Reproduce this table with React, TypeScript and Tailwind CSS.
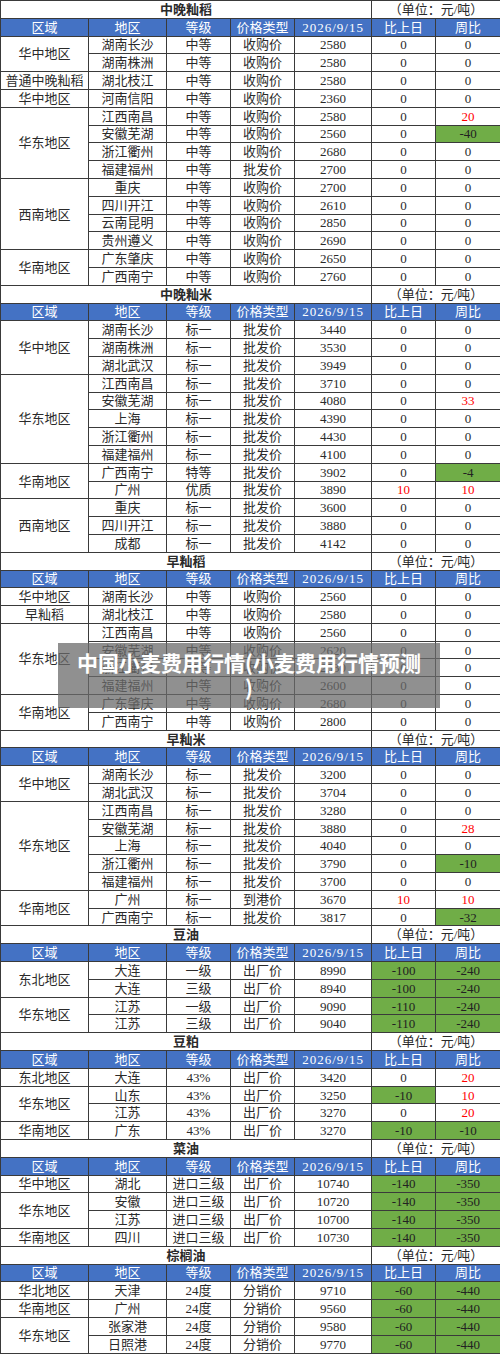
import React from "react";

type Row = [string, string, string, string, string, string];
// group: region label + rows
type Group = { area: string; rows: Row[] };
type Section = { title: string; groups: Group[] };

const sections: Section[] = [
  {
    title: "中晚籼稻",
    groups: [
      { area: "华中地区", rows: [["湖南长沙", "中等", "收购价", "2580", "0", "0"], ["湖南株洲", "中等", "收购价", "2580", "0", "0"]] },
      { area: "普通中晚籼稻", rows: [["湖北枝江", "中等", "收购价", "2580", "0", "0"]] },
      { area: "华中地区", rows: [["河南信阳", "中等", "收购价", "2360", "0", "0"]] },
      {
        area: "华东地区",
        rows: [
          ["江西南昌", "中等", "收购价", "2580", "0", "20"],
          ["安徽芜湖", "中等", "收购价", "2560", "0", "-40"],
          ["浙江衢州", "中等", "收购价", "2680", "0", "0"],
          ["福建福州", "中等", "批发价", "2700", "0", "0"],
        ],
      },
      {
        area: "西南地区",
        rows: [
          ["重庆", "中等", "收购价", "2700", "0", "0"],
          ["四川开江", "中等", "收购价", "2610", "0", "0"],
          ["云南昆明", "中等", "收购价", "2850", "0", "0"],
          ["贵州遵义", "中等", "收购价", "2690", "0", "0"],
        ],
      },
      { area: "华南地区", rows: [["广东肇庆", "中等", "收购价", "2650", "0", "0"], ["广西南宁", "中等", "收购价", "2760", "0", "0"]] },
    ],
  },
  {
    title: "中晚籼米",
    groups: [
      {
        area: "华中地区",
        rows: [
          ["湖南长沙", "标一", "批发价", "3440", "0", "0"],
          ["湖南株洲", "标一", "批发价", "3530", "0", "0"],
          ["湖北武汉", "标一", "批发价", "3949", "0", "0"],
        ],
      },
      {
        area: "华东地区",
        rows: [
          ["江西南昌", "标一", "批发价", "3710", "0", "0"],
          ["安徽芜湖", "标一", "批发价", "4080", "0", "33"],
          ["上海", "标一", "批发价", "4390", "0", "0"],
          ["浙江衢州", "标一", "批发价", "4430", "0", "0"],
          ["福建福州", "标一", "批发价", "4100", "0", "0"],
        ],
      },
      { area: "华南地区", rows: [["广西南宁", "特等", "批发价", "3902", "0", "-4"], ["广州", "优质", "批发价", "3890", "10", "10"]] },
      {
        area: "西南地区",
        rows: [
          ["重庆", "标一", "批发价", "3600", "0", "0"],
          ["四川开江", "标一", "批发价", "3880", "0", "0"],
          ["成都", "标一", "批发价", "4142", "0", "0"],
        ],
      },
    ],
  },
  {
    title: "早籼稻",
    groups: [
      { area: "华中地区", rows: [["湖南长沙", "中等", "收购价", "2560", "0", "0"]] },
      { area: "早籼稻", rows: [["湖北枝江", "中等", "收购价", "2580", "0", "0"]] },
      {
        area: "华东地区",
        rows: [
          ["江西南昌", "中等", "收购价", "2560", "0", "0"],
          ["安徽芜湖", "中等", "收购价", "2620", "0", "0"],
          ["浙江衢州", "中等", "收购价", "2530", "0", "0"],
          ["福建福州", "中等", "收购价", "2600", "0", "0"],
        ],
      },
      { area: "华南地区", rows: [["广东肇庆", "中等", "收购价", "2680", "0", "0"], ["广西南宁", "中等", "收购价", "2800", "0", "0"]] },
    ],
  },
  {
    title: "早籼米",
    groups: [
      { area: "华中地区", rows: [["湖南长沙", "标一", "批发价", "3200", "0", "0"], ["湖北武汉", "标一", "批发价", "3704", "0", "0"]] },
      {
        area: "华东地区",
        rows: [
          ["江西南昌", "标一", "批发价", "3280", "0", "0"],
          ["安徽芜湖", "标一", "批发价", "3880", "0", "28"],
          ["上海", "标一", "批发价", "4040", "0", "0"],
          ["浙江衢州", "标一", "批发价", "3790", "0", "-10"],
          ["福建福州", "标一", "批发价", "3700", "0", "0"],
        ],
      },
      { area: "华南地区", rows: [["广州", "标一", "到港价", "3670", "10", "10"], ["广西南宁", "标一", "批发价", "3817", "0", "-32"]] },
    ],
  },
  {
    title: "豆油",
    groups: [
      { area: "东北地区", rows: [["大连", "一级", "出厂价", "8990", "-100", "-240"], ["大连", "三级", "出厂价", "8940", "-100", "-240"]] },
      { area: "华东地区", rows: [["江苏", "一级", "出厂价", "9090", "-110", "-240"], ["江苏", "三级", "出厂价", "9040", "-110", "-240"]] },
    ],
  },
  {
    title: "豆粕",
    groups: [
      { area: "东北地区", rows: [["大连", "43%", "出厂价", "3420", "0", "20"]] },
      { area: "华东地区", rows: [["山东", "43%", "出厂价", "3250", "-10", "10"], ["江苏", "43%", "出厂价", "3270", "0", "20"]] },
      { area: "华南地区", rows: [["广东", "43%", "出厂价", "3270", "-10", "-10"]] },
    ],
  },
  {
    title: "菜油",
    groups: [
      { area: "华中地区", rows: [["湖北", "进口三级", "出厂价", "10740", "-140", "-350"]] },
      { area: "华东地区", rows: [["安徽", "进口三级", "出厂价", "10720", "-140", "-350"], ["江苏", "进口三级", "出厂价", "10700", "-140", "-350"]] },
      { area: "华南地区", rows: [["四川", "进口三级", "出厂价", "10730", "-140", "-350"]] },
    ],
  },
  {
    title: "棕榈油",
    groups: [
      { area: "华北地区", rows: [["天津", "24度", "分销价", "9710", "-60", "-440"]] },
      { area: "华南地区", rows: [["广州", "24度", "分销价", "9560", "-60", "-440"]] },
      { area: "华东地区", rows: [["张家港", "24度", "分销价", "9580", "-60", "-440"], ["日照港", "24度", "分销价", "9770", "-60", "-440"]] },
    ],
  },
];

const headers = ["区域", "地区", "等级", "价格类型", "2026/9/15", "比上日", "周比"];

const cell = "border border-[#3a3a3a] p-0 text-center align-middle whitespace-nowrap";

function Change({ v }: { v: string }) {
  if (v.startsWith("-")) return <td className={`${cell} bg-[#70ad47] text-[#222]`}>{v}</td>;
  if (v !== "0") return <td className={`${cell} text-[#ff0000]`}>{v}</td>;
  return <td className={cell}>{v}</td>;
}

function SectionRows({ s }: { s: Section }) {
  return (
    <>
      <tr className="h-[17.8px]">
        <td colSpan={5} className={`${cell} font-bold`}>{s.title}</td>
        <td colSpan={2} className={cell}>（单位：元/吨）</td>
      </tr>
      <tr className="h-[17.8px] bg-[#4472c4] text-white">
        {headers.map((h, i) => (
          <td key={h} className={i === 4 ? `${cell} tracking-[1px]` : cell}>{h}</td>
        ))}
      </tr>
      {s.groups.map((g, gi) =>
        g.rows.map((r, ri) => (
          <tr key={`${gi}-${ri}`} className="h-[17.8px]">
            {ri === 0 && (
              <td rowSpan={g.rows.length} className={cell}>{g.area}</td>
            )}
            <td className={cell}>{r[0]}</td>
            <td className={cell}>{r[1]}</td>
            <td className={cell}>{r[2]}</td>
            <td className={cell}>{r[3]}</td>
            <Change v={r[4]} />
            <Change v={r[5]} />
          </tr>
        ))
      )}
    </>
  );
}

export default function App() {
  return (
    <div className="relative w-[500px] h-[1354px] overflow-hidden bg-white">
      <table
        className="w-[500px] table-fixed border-collapse text-[13px] leading-none text-[#2a2a2a]"
        style={{ fontFamily: '"Liberation Serif", "Noto Sans CJK SC", serif' }}
      >
        <colgroup>
          <col className="w-[88px]" />
          <col className="w-[78px]" />
          <col className="w-[64px]" />
          <col className="w-[64px]" />
          <col className="w-[77px]" />
          <col className="w-[64px]" />
          <col className="w-[65px]" />
        </colgroup>
        <tbody>
          {sections.map((s) => (
            <SectionRows key={s.title} s={s} />
          ))}
        </tbody>
      </table>

      {/* watermark banner */}
      <div className="absolute left-[58px] top-[643px] w-[382px] h-[65px] bg-[#6b6b6b]/75 py-[7px]">
        <p
          className="whitespace-nowrap text-center text-[21px] leading-[25px] font-bold text-white"
          style={{ fontFamily: '"Noto Sans CJK SC", sans-serif' }}
        >
          中国小麦费用行情(小麦费用行情预测
          <br />)
        </p>
      </div>
    </div>
  );
}
